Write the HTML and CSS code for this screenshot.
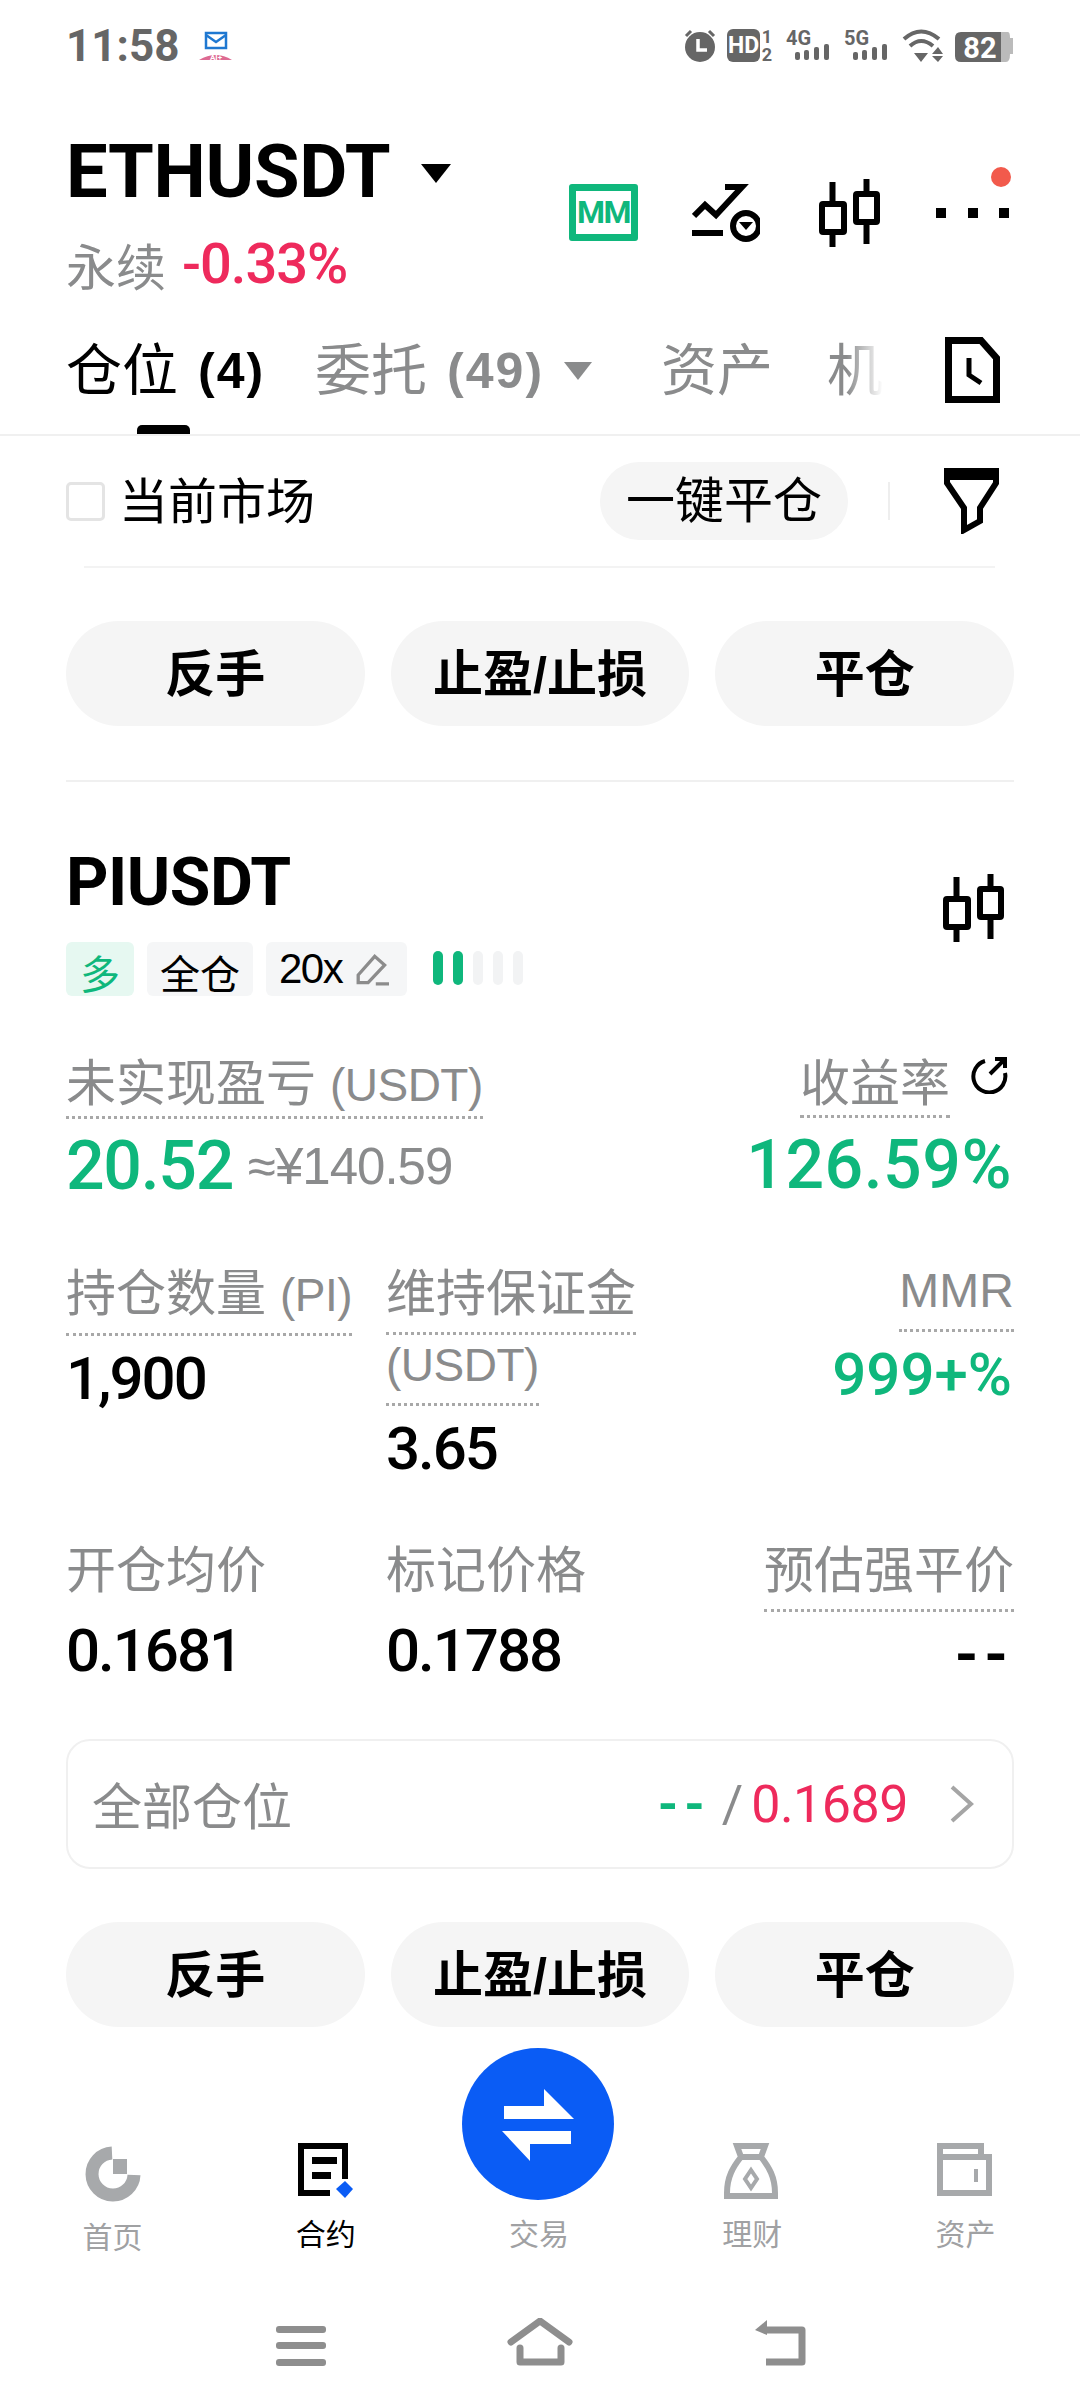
FILE: index.html
```html
<!DOCTYPE html>
<html lang="zh-CN">
<head>
    <meta charset="UTF-8">
    <meta name="viewport" content="width=device-width, initial-scale=1.0">
    <title>ETHUSDT 永续</title>
    <link rel="stylesheet" href="styles.css">
</head>
<body>
    <div class="status-bar">
        <span class="clock">11:58</span>
        <svg class="mail-icon" width="36" height="32" viewBox="0 0 36 32">
            <rect x="7" y="3" width="20" height="15" fill="none" stroke="#1f78d1" stroke-width="2.5"/>
            <path d="M7 5 L17 12 L27 5" fill="none" stroke="#1f78d1" stroke-width="2.5"/>
            <path d="M0 30 Q17 20 33 30 Z" fill="#dd6a92"/>
            <text x="17" y="30" class="st-ai">AI+</text>
        </svg>
        <svg class="status-icons" width="336" height="40" viewBox="680 26 336 40">
            <circle cx="700" cy="47" r="15" fill="#666"/>
            <path d="M686 36 L691 31 M714 36 L709 31" stroke="#666" stroke-width="3"/>
            <path d="M698 39 V50 H707" fill="none" stroke="#fff" stroke-width="3.5"/>
            <rect x="727" y="29" width="33" height="33" rx="6" fill="#666"/>
            <text x="743.5" y="53" class="st-hd">HD</text>
            <text x="767" y="43" class="st-small">1</text>
            <text x="767" y="61" class="st-small">2</text>
            <text x="786" y="45" class="st-net">4G</text>
            <g fill="#666">
                <rect x="795" y="52" width="5" height="8" rx="2"/><rect x="804" y="50" width="5" height="10" rx="2"/>
                <rect x="814" y="47" width="5" height="13" rx="2"/><rect x="824" y="44" width="5" height="16" rx="2"/>
            </g>
            <text x="844" y="45" class="st-net">5G</text>
            <g fill="#666">
                <rect x="853" y="52" width="5" height="8" rx="2"/><rect x="862" y="50" width="5" height="10" rx="2"/>
                <rect x="872" y="47" width="5" height="13" rx="2"/><rect x="882" y="44" width="5" height="16" rx="2"/>
            </g>
            <path d="M904 39 Q921 24 939 39 M910 46 Q921 36 933 46" fill="none" stroke="#666" stroke-width="4"/>
            <path d="M914 53 L921 62 L928 53 Z M932 54 L938 47 L943 54 Z M932 56 H943 L938 62 Z" fill="#666"/>
            <path d="M961 32 H1001 V62 H961 Q955 62 955 56 V38 Q955 32 961 32 Z" fill="#666"/>
            <path d="M1001 32 H1008 Q1010 32 1010 38 H1013 V54 H1010 Q1010 62 1006 62 H1001 Z" fill="#bbb"/>
            <text x="980" y="58" class="st-batt">82</text>
        </svg>
    </div>

    <header class="pair-header">
        <div class="pair-info">
            <div class="pair-title">
                <h1>ETHUSDT</h1>
                <span class="caret caret-big"></span>
            </div>
            <div class="pair-sub"><span class="perp">永续</span><span class="change">-0.33%</span></div>
        </div>
        <div class="pair-tools">
            <div class="mm-badge">MM</div>
            <svg class="tool-alert" width="68" height="60" viewBox="0 0 68 60" fill="none" stroke="#000">
                <path d="M2 33 L13 22 L24 32 L50 4 H33" stroke-width="6"/>
                <rect x="0" y="47" width="31" height="6" fill="#000" stroke="none"/>
                <circle cx="54" cy="43" r="13" stroke-width="6"/>
                <path d="M47 39 H61 L54 47 Z" fill="#000" stroke="none"/>
            </svg>
            <svg class="tool-candle" width="61" height="68" viewBox="0 0 61 68" fill="none" stroke="#000" stroke-width="6">
                <rect x="3" y="25" width="22" height="28" rx="1"/>
                <path d="M13.500 3 V25 M13.500 53 V68"/>
                <rect x="37" y="15" width="21" height="28" rx="1"/>
                <path d="M47.500 0 V15 M47.500 43 V65"/>
            </svg>
            <div class="tool-more">
                <i></i><i></i><i></i>
                <span class="red-dot"></span>
            </div>
        </div>
    </header>

    <nav class="tabs">
        <div class="tab active">仓位<b>(4)</b></div>
        <div class="tab tab-orders">委托<b>(49)</b><span class="caret caret-grey"></span></div>
        <div class="tab">资产</div>
        <div class="tab tab-fade">机</div>
        <svg class="tab-doc" width="55" height="66" viewBox="0 0 55 66" fill="none" stroke="#000">
            <path d="M3.500 3.500 H36 L51.500 21 V62.500 H3.500 Z" stroke-width="7"/>
            <path d="M24 21 V38 L36 46" stroke-width="5"/>
        </svg>
    </nav>

    <div class="filter-row">
        <span class="checkbox"></span>
        <span class="filter-label">当前市场</span>
        <span class="pill">一键平仓</span>
        <span class="filter-divider"></span>
        <svg width="55" height="66" viewBox="0 0 55 66" fill="none" stroke="#000" stroke-width="6">
            <path d="M3 3 H52 V15 L36 40 V53 L20 62 V40 L3 15 Z"/>
            <path d="M3 9 H52"/>
        </svg>
    </div>
    <div class="rule"></div>

    <div class="actions first">
        <button>反手</button>
        <button>止盈/止损</button>
        <button>平仓</button>
    </div>
    <div class="divider"></div>

    <section class="position">
        <div class="position-head">
            <div>
                <h2>PIUSDT</h2>
                <div class="tags">
                    <span class="tag tag-long">多</span>
                    <span class="tag">全仓</span>
                    <span class="tag tag-lev">20x
                        <svg width="33" height="33" viewBox="0 0 30 30" fill="none" stroke="#8c8c8c" stroke-width="3">
                            <path d="M2 20 L17 3 L26 11 L11 27 H2 Z"/>
                            <path d="M18 28 H30"/>
                        </svg>
                    </span>
                    <span class="adl"><i class="on"></i><i class="on"></i><i></i><i></i><i></i></span>
                </div>
            </div>
            <svg class="head-candle" width="65" height="68" viewBox="0 0 61 68" fill="none" stroke="#000" stroke-width="6">
                <rect x="3" y="25" width="22" height="28" rx="1"/>
                <path d="M13.500 3 V25 M13.500 53 V68"/>
                <rect x="37" y="15" width="21" height="28" rx="1"/>
                <path d="M47.500 0 V15 M47.500 43 V65"/>
            </svg>
        </div>

        <div class="pnl-row">
            <div>
                <div class="label dotted tight">未实现盈亏 <span class="lat">(USDT)</span></div>
                <div class="pnl-value"><span class="num big green">20.52</span><span class="approx">≈¥140.59</span></div>
            </div>
            <div class="right">
                <div class="roe-label">
                    <span class="label dotted tight">收益率</span>
                    <svg width="38" height="38" viewBox="0 0 38 38" fill="none" stroke="#000" stroke-width="4">
                        <path d="M15 5 A16 16 0 1 0 35 17"/>
                        <path d="M20 18 L34 4 M25 3 H35 V12"/>
                    </svg>
                </div>
                <div class="pnl-value roe-value"><span class="num big green">126.59%</span></div>
            </div>
        </div>

        <div class="metrics metrics-a">
            <div>
                <div class="label dotted">持仓数量 <span class="lat">(PI)</span></div>
                <div class="num value">1,900</div>
            </div>
            <div>
                <div class="label dotted">维持保证金</div>
                <div class="label dotted second"><span class="lat">(USDT)</span></div>
                <div class="num value">3.65</div>
            </div>
            <div class="right mmr">
                <div class="label dotted mmr-label">MMR</div>
                <div class="num value green">999+%</div>
            </div>
        </div>

        <div class="metrics metrics-b">
            <div>
                <div class="label">开仓均价</div>
                <div class="num value">0.1681</div>
            </div>
            <div>
                <div class="label">标记价格</div>
                <div class="num value">0.1788</div>
            </div>
            <div class="right">
                <div class="label dotted">预估强平价</div>
                <div class="num value dashes">--</div>
            </div>
        </div>

        <div class="all-box">
            <span class="all-label">全部仓位</span>
            <span class="all-right">
                <span class="all-dash green">--</span>
                <span class="all-slash">/</span>
                <span class="all-price">0.1689</span>
            </span>
            <svg width="26" height="38" viewBox="0 0 26 38" fill="none" stroke="#a5a5a5" stroke-width="4">
                <path d="M3 2 L22 19 L3 36"/>
            </svg>
        </div>
    </section>

    <div class="actions">
        <button>反手</button>
        <button>止盈/止损</button>
        <button>平仓</button>
    </div>

    <footer class="tabbar">
        <div class="bar-item home-item">
            <svg width="56" height="56" viewBox="0 0 56 56" fill="none" stroke="#a7a9ab">
                <path d="M27 7 A21 21 0 1 0 49 29" stroke-width="13"/>
                <rect x="28" y="13" width="14" height="15" fill="#a7a9ab" stroke="none"/>
            </svg>
            <span>首页</span>
        </div>
        <div class="bar-item active">
            <svg width="56" height="56" viewBox="0 0 56 56" fill="none" stroke="#000" stroke-width="6">
                <path d="M47 36 V3 H3 V50 H32"/>
                <rect x="14" y="14" width="25" height="7" fill="#000" stroke="none"/>
                <rect x="14" y="29" width="19" height="7" fill="#000" stroke="none"/>
                <path d="M47 38 L55 46 L47 55 L38 46 Z" fill="#0a5cf5" stroke="none"/>
            </svg>
            <span>合约</span>
        </div>
        <div class="bar-item trade-item">
            <div class="fab">
                <svg width="152" height="152" viewBox="0 0 152 152" fill="#fff">
                    <path d="M42 58 H82 V41 L112 71 H42 Z"/>
                    <path d="M40 83 H109 V96 H68 V113 Z"/>
                </svg>
            </div>
            <span>交易</span>
        </div>
        <div class="bar-item">
            <svg width="56" height="56" viewBox="0 0 56 56" fill="none" stroke="#a7a9ab" stroke-width="6">
                <path d="M13 3 H41 L37 14 C45 24 51 34 51 50 V53 H3 V50 C3 34 9 24 17 14 Z"/>
                <path d="M17 14 H37"/>
                <path d="M27 27 L33 36 L27 45 L21 36 Z" stroke-width="4"/>
            </svg>
            <span>理财</span>
        </div>
        <div class="bar-item">
            <svg width="56" height="56" viewBox="0 0 56 56" fill="none" stroke="#a7a9ab" stroke-width="6">
                <path d="M3 14 V3 H44 V14"/>
                <path d="M3 14 H52 V50 H3 Z"/>
                <path d="M39 26 V39" stroke-width="4"/>
            </svg>
            <span>资产</span>
        </div>
    </footer>

    <div class="system-nav">
        <svg width="50" height="40" viewBox="0 0 50 40" fill="#8e8e8e">
            <rect x="0" y="0" width="50" height="7" rx="3"/>
            <rect x="0" y="16" width="50" height="7" rx="3"/>
            <rect x="0" y="33" width="50" height="7" rx="3"/>
        </svg>
        <svg width="66" height="48" viewBox="0 0 66 48" fill="none" stroke="#8e8e8e" stroke-width="7" stroke-linejoin="round" stroke-linecap="round">
            <path d="M4 24 L33 3 L62 24"/>
            <path d="M13 30 V44 H54 V30"/>
        </svg>
        <svg width="52" height="46" viewBox="0 0 52 46" fill="none" stroke="#8e8e8e" stroke-width="7" stroke-linejoin="round">
            <path d="M10 10 H48 V42 H12"/>
            <path d="M13 0 V15 L1 10 Z" fill="#8e8e8e" stroke="none"/>
        </svg>
    </div>
</body>
</html>
```

FILE: styles.css
```css
* {
    margin: 0;
    padding: 0;
    box-sizing: border-box;
}

body {
    width: 1080px;
    height: 2408px;
    overflow: hidden;
    background: #fff;
    color: #000;
    font-family: "Liberation Sans", "Noto Sans CJK SC", sans-serif;
}

.green {
    color: #0fb77c;
}

/* status bar */
.status-bar {
    height: 90px;
    padding: 26px 64px 0 66px;
    display: flex;
    align-items: flex-start;
}

.clock {
    font-family: Roboto, sans-serif;
    font-weight: 700;
    font-size: 44px;
    line-height: 40px;
    color: #666;
}

.mail-icon {
    margin: 4px 0 0 20px;
}

.status-icons {
    margin-left: auto;
}

.status-icons text {
    font-family: Roboto, sans-serif;
    font-weight: 700;
    fill: #666;
}

.st-ai {
    font-family: Roboto, sans-serif;
    font-weight: 700;
    font-size: 8px;
    fill: #fff;
    text-anchor: middle;
}

.st-hd {
    font-size: 23px;
    fill: #fff !important;
    text-anchor: middle;
}

.st-small {
    font-size: 18px;
    text-anchor: middle;
}

.st-net {
    font-size: 20px;
}

.st-batt {
    font-size: 29px;
    fill: #fff !important;
    text-anchor: middle;
}

/* pair header */
.pair-header {
    height: 245px;
    padding: 0 66px;
    display: flex;
    justify-content: space-between;
    align-items: center;
}

.pair-info {
    height: 100%;
    padding-top: 42px;
}

.pair-title {
    display: flex;
    align-items: center;
}

h1 {
    font-family: Roboto, sans-serif;
    font-size: 74px;
    line-height: 80px;
    font-weight: 700;
    letter-spacing: -0.300px;
}

.caret {
    display: inline-block;
    width: 0;
    height: 0;
    border-style: solid;
    border-color: #000 transparent transparent;
}

.caret-big {
    border-width: 19px 15px 0;
    margin: 2px 0 0 31px;
}

.pair-sub {
    margin-top: 22px;
    height: 60px;
    display: flex;
    align-items: center;
    font-size: 50px;
}

.perp {
    color: #8a8b8c;
}

.change {
    margin-left: 16px;
    color: #ee2a5c;
    font-family: Roboto, sans-serif;
    font-weight: 500;
    font-size: 56px;
    letter-spacing: -1px;
}

.pair-tools {
    display: flex;
    align-items: center;
    margin-right: 5px;
}

.mm-badge {
    width: 69px;
    height: 57px;
    border: 7px solid #0fb77c;
    border-radius: 3px;
    color: #0fb77c;
    font-family: Roboto, sans-serif;
    font-weight: 700;
    font-size: 32px;
    line-height: 43px;
    letter-spacing: -1.500px;
    text-align: center;
}

.tool-alert {
    margin-left: 54px;
}

.tool-candle {
    margin-left: 59px;
}

.tool-more {
    position: relative;
    margin-left: 56px;
    width: 73px;
    display: flex;
    justify-content: space-between;
}

.tool-more i {
    width: 10px;
    height: 10px;
    background: #000;
}

.red-dot {
    position: absolute;
    top: -41px;
    right: -2px;
    width: 20px;
    height: 20px;
    border-radius: 50%;
    background: #f25a4c;
}

/* tabs */
.tabs {
    height: 101px;
    padding: 3px 66px 0;
    display: flex;
    align-items: flex-start;
    border-bottom: 2px solid #f0f0f0;
    font-size: 56px;
    line-height: 66px;
    color: #8a8b8c;
}

.tab {
    position: relative;
    display: flex;
    align-items: center;
    margin-right: 54px;
}

.tab.active {
    margin-right: 50px;
    color: #000;
}

.tab-orders {
    margin-right: 69px;
}

.tab b {
    margin-left: 20px;
    font-size: 50px;
    letter-spacing: 2px;
}

.tab.active::after {
    content: "";
    position: absolute;
    left: 71px;
    top: 87px;
    width: 53px;
    height: 9px;
    border-radius: 5px 5px 0 0;
    background: #000;
}

.caret-grey {
    border-width: 18px 14px 0;
    border-top-color: #8a8b8c;
    margin-left: 20px;
}

.tab-fade {
    background: linear-gradient(90deg, #8a8b8c 35%, #fff 100%);
    -webkit-background-clip: text;
    background-clip: text;
    color: transparent;
}

.tab-doc {
    margin: -1px 14px 0 auto;
}

/* filter row */
.filter-row {
    height: 130px;
    padding: 0 14px 0 66px;
    display: flex;
    align-items: center;
}

.checkbox {
    width: 39px;
    height: 39px;
    border: 3px solid #e4e4e4;
    border-radius: 5px;
}

.filter-label {
    margin: -7px 0 0 14px;
    font-size: 49px;
}

.pill {
    margin-left: auto;
    width: 248px;
    height: 78px;
    border-radius: 39px;
    background: #f5f5f5;
    font-size: 49px;
    line-height: 79px;
    text-align: center;
}

.filter-divider {
    width: 2px;
    height: 38px;
    margin: 0 54px 0 40px;
    background: #eee;
}

.filter-row svg {
    margin-right: 67px;
}

.rule {
    height: 2px;
    margin: 0 85px 0 84px;
    background: #f3f3f3;
}

/* action buttons */
.actions {
    margin-top: 53px;
    padding: 0 66px;
    display: flex;
    gap: 26px;
}

.actions.first {
    margin-top: 53px;
}

.actions button {
    flex: 1;
    height: 105px;
    padding-bottom: 8px;
    border: none;
    border-radius: 53px;
    background: #f5f5f5;
    color: #000;
    font-family: inherit;
    font-weight: 700;
    font-size: 50px;
}

.divider {
    height: 2px;
    margin: 54px 66px 0;
    background: #f0f0f0;
}

/* position card */
.position {
    padding: 0 66px;
}

.position-head {
    margin-top: 66px;
    display: flex;
    justify-content: space-between;
    align-items: flex-start;
}

h2 {
    font-family: Roboto, sans-serif;
    font-size: 66px;
    line-height: 70px;
    font-weight: 700;
    letter-spacing: -0.500px;
}

.head-candle {
    margin-top: 26px;
    margin-right: 8px;
}

.tags {
    margin-top: 24px;
    display: flex;
    gap: 13px;
}

.tag {
    height: 54px;
    padding: 0 13px;
    border-radius: 6px;
    background: #f5f6f7;
    font-size: 40px;
    line-height: 66px;
    overflow: hidden;
}

.tag-long {
    padding: 0 14px;
    background: #e6f8f1;
    color: #0fb77c;
}

.tag-lev {
    display: flex;
    align-items: center;
    gap: 14px;
    padding-right: 18px;
    font-size: 42px;
    line-height: 54px;
    letter-spacing: -1.500px;
}

.adl {
    margin: 9px 0 0 13px;
    display: flex;
    gap: 10px;
}

.adl i {
    width: 10px;
    height: 34px;
    border-radius: 5px;
    background: #f2f3f4;
}

.adl i.on {
    background: #0fb77c;
}

.label {
    font-size: 50px;
    line-height: 56px;
    padding-bottom: 10px;
    border-bottom: 3px solid transparent;
    color: #8a8b8c;
    white-space: nowrap;
}

.lat {
    font-size: 46px;
    letter-spacing: -0.500px;
}

.mmr-label {
    font-size: 48px;
}

.dotted {
    width: fit-content;
    border-bottom: 3px dotted #a8a8a8;
}

.label.tight {
    padding-bottom: 3px;
}

.label.second {
    margin-top: 1px;
}

.right {
    display: flex;
    flex-direction: column;
    align-items: flex-end;
}

.num {
    font-family: Roboto, sans-serif;
    font-weight: 500;
}

.pnl-row {
    margin-top: 60px;
    display: flex;
    justify-content: space-between;
}

.roe-label {
    display: flex;
    align-items: flex-start;
    gap: 20px;
    margin-right: 6px;
}

.pnl-value {
    margin-top: 12px;
    height: 70px;
    display: flex;
    align-items: center;
}

.roe-value {
    margin-right: 2px;
}

.big {
    font-size: 68px;
    letter-spacing: -1.300px;
}

.roe-value .big {
    letter-spacing: 0.500px;
}

.approx {
    margin-left: 15px;
    font-size: 51px;
    color: #8a8b8c;
    letter-spacing: -1px;
}

.metrics {
    display: grid;
    grid-template-columns: 320px 1fr auto;
}

.metrics-a {
    margin-top: 65px;
}

.metrics-b {
    margin-top: 63px;
}

.mmr {
    margin-top: -3px;
}

.value {
    margin-top: 12px;
    font-size: 60px;
    line-height: 62px;
    letter-spacing: -2px;
}

.metrics-b .value {
    margin-top: 8px;
}

.mmr .value {
    margin-right: 2px;
    letter-spacing: 0;
}

.dashes {
    font-weight: 700;
    letter-spacing: 6px;
    padding-top: 4px;
    height: 62px;
}

.all-box {
    margin-top: 57px;
    height: 130px;
    padding: 0 37px 0 24px;
    display: flex;
    align-items: center;
    border: 2px solid #f0f0f0;
    border-radius: 24px;
}

.all-label {
    margin-top: -2px;
    font-size: 50px;
    color: #8a8b8c;
}

.all-right {
    margin-left: auto;
    margin-right: 41px;
    display: flex;
    align-items: center;
    gap: 8px;
    font-family: Roboto, sans-serif;
    font-size: 52px;
}

.all-dash {
    margin-right: 3px;
    letter-spacing: 6px;
    font-weight: 700;
}

.all-slash {
    color: #8a8b8c;
}

.all-price {
    color: #ee2a5c;
    letter-spacing: -0.500px;
}

/* bottom navigation */
.tabbar {
    margin-top: 116px;
    padding: 0 8px 0 6px;
    display: grid;
    grid-template-columns: repeat(5, 1fr);
}

.bar-item {
    position: relative;
    height: 112px;
    display: flex;
    flex-direction: column;
    align-items: center;
    justify-content: flex-end;
    font-size: 30px;
    line-height: 40px;
    color: #a0a1a3;
}

.bar-item svg {
    margin-bottom: 16px;
}

.bar-item.active {
    color: #000;
}

.home-item {
    padding-top: 3px;
    height: 115px;
}

.fab {
    position: absolute;
    left: 30px;
    top: -95px;
    width: 152px;
    height: 152px;
    border-radius: 50%;
    background: #0a5cf5;
}

.fab svg {
    display: block;
    margin: 0;
}

.system-nav {
    margin-top: 60px;
    padding: 0 274px 0 276px;
    display: flex;
    justify-content: space-between;
    align-items: flex-end;
}
```
